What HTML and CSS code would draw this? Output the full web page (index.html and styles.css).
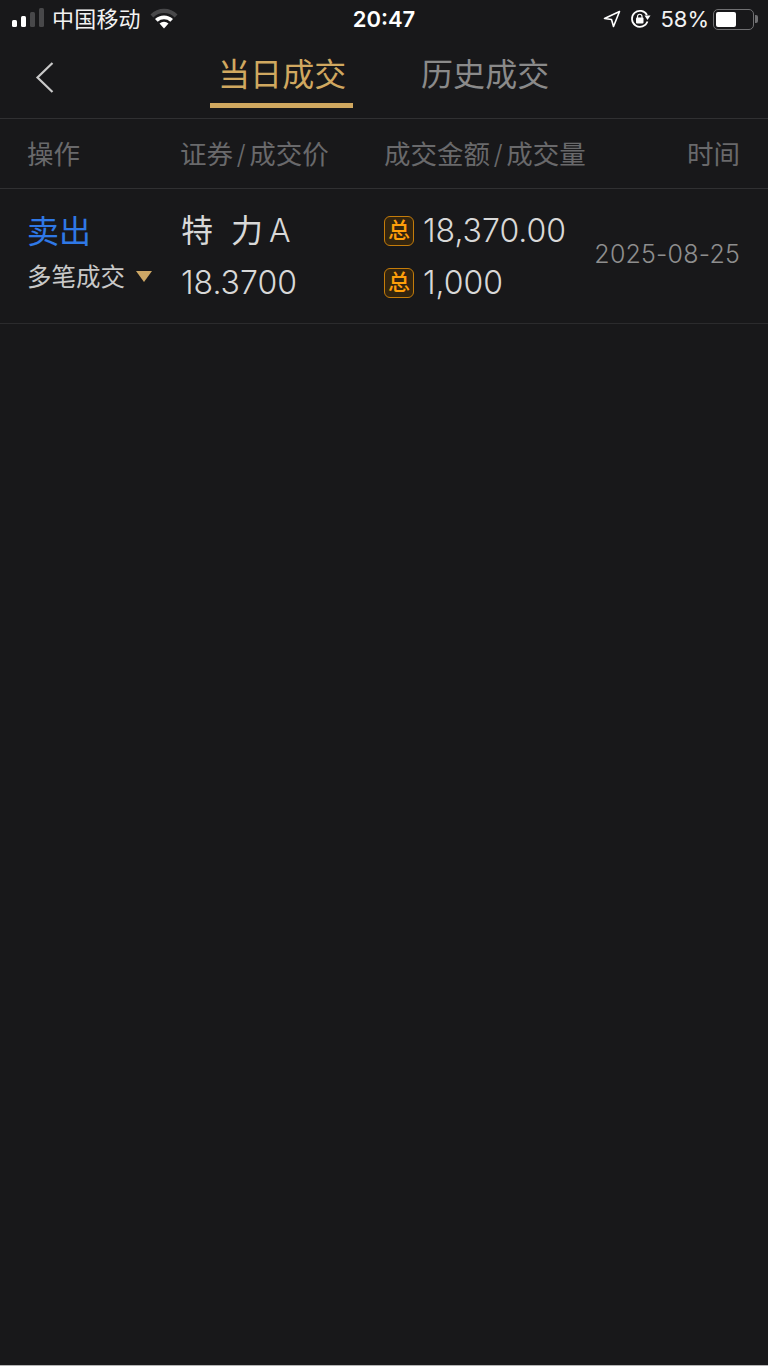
FILE: index.html
```html
<!DOCTYPE html>
<html lang="zh-CN">
<head>
<meta charset="utf-8">
<title>当日成交</title>
<link rel="stylesheet" href="styles.css">
</head>
<body>
<div class="page">
  <header class="status">
    <div class="status-left">
      <svg class="signal" width="32" height="22" viewBox="0 0 32 22"><rect x="0" y="12" width="5" height="7" rx="1.5" fill="#fff"/><rect x="9" y="8" width="5" height="11" rx="1.500" fill="#fff"/><rect x="18" y="4" width="5" height="15" rx="1.500" fill="#48484a"/><rect x="27" y="0" width="5" height="19" rx="1.500" fill="#48484a"/></svg>
      <span class="carrier">中国移动</span>
      <svg class="wifi" width="28" height="22" viewBox="0 0 28 22"><path d="M0.500 6.500A19 19 0 0 1 27.500 6.500L24.700 9.500A15 15 0 0 0 3.300 9.500Z" fill="#48484a"/><path d="M5 11A13 13 0 0 1 23 11L20.300 13.800A9.200 9.200 0 0 0 7.700 13.800Z" fill="#fff"/><path d="M9.500 15.500A7 7 0 0 1 18.500 15.500L14 20.500Z" fill="#fff"/></svg>
    </div>
    <div class="clock">20:47</div>
    <div class="status-right">
      <svg width="18" height="18" viewBox="0 0 18 18"><path d="M16.500 1.500L1.500 8.500L8.500 9.500L10.500 16.500Z" fill="none" stroke="#fff" stroke-width="1.600" stroke-linejoin="round"/></svg>
      <svg class="lock" width="21" height="20" viewBox="0 0 21 20"><path d="M17.500 12.500A8 8 0 1 1 17 6" fill="none" stroke="#fff" stroke-width="1.700"/><path d="M14.500 6.500L20.500 6.500L17.500 11Z" fill="#fff"/><rect x="6" y="8.500" width="7.500" height="6" rx="1" fill="#fff"/><path d="M7.500 9V7.500a2.200 2.200 0 0 1 4.500 0V9" fill="none" stroke="#fff" stroke-width="1.200"/></svg>
      <span class="percent">58%</span>
      <div class="battery"><div class="battery-body"><div class="battery-level"></div></div><div class="battery-tip"></div></div>
    </div>
  </header>

  <nav class="nav">
    <svg class="back" width="20" height="34" viewBox="0 0 20 34"><path d="M17.500 2L2.500 16.500L17.500 31" fill="none" stroke="#c9c9c9" stroke-width="2.200"/></svg>
    <div class="tab tab-active">当日成交</div>
    <div class="tab">历史成交</div>
  </nav>

  <div class="row-head">
    <div class="col-op">操作</div>
    <div class="col-sec">证券<i>/</i>成交价</div>
    <div class="col-amt">成交金额<i>/</i>成交量</div>
    <div class="col-time">时间</div>
  </div>

  <div class="row">
    <div class="col-op cell-op">
      <div class="sell">卖出</div>
      <div class="multi">多笔成交<span class="caret"></span></div>
    </div>
    <div class="col-sec values">
      <div class="value name">特<span class="name-gap">力</span><span class="name-a">A</span></div>
      <div class="value">18.3700</div>
    </div>
    <div class="col-amt values">
      <div class="value"><span class="badge">总</span>18,370.00</div>
      <div class="value"><span class="badge">总</span>1,000</div>
    </div>
    <div class="col-time date">2025-08-25</div>
  </div>
</div>
</body>
</html>
```

FILE: styles.css
```css
* { box-sizing: border-box; }
html, body { margin: 0; padding: 0; }
body {
  background: #18181a;
  font-family: "Inter", "Noto Sans CJK SC", sans-serif;
  color: #d8d8d8;
}
.page {
  height: 1366px;
  border-bottom: 1px solid #b5b5b5;
  overflow: hidden;
}
.status {
  height: 38px;
  display: grid;
  grid-template-columns: 1fr auto 1fr;
  align-items: center;
  padding: 0 10px 0 12px;
  color: #fff;
}
.status-left { display: flex; align-items: center; }
.signal { margin-right: 8px; }
.carrier { font-size: 22px; line-height: 30px; color: #f2f2f2; margin-right: 9px; letter-spacing: 0.200px; }
.clock { font-size: 22px; font-weight: 600; margin-left: -2px; }
.status-right { display: flex; align-items: center; justify-content: flex-end; }
.lock { margin-left: 9px; }
.percent { font-size: 22px; margin-left: 9px; margin-right: 4px; color: #f2f2f2; }
.battery { display: flex; align-items: center; }
.battery-body {
  width: 41px; height: 21px;
  border: 1.500px solid #707072;
  border-radius: 5px;
  padding: 2px;
}
.battery-level { width: 20px; height: 100%; background: #fff; border-radius: 2px; }
.battery-tip { width: 3px; height: 8px; background: #707072; border-radius: 0 2px 2px 0; margin-left: 1px; }

.nav {
  position: relative;
  height: 81px;
  border-bottom: 1px solid #303032;
  display: flex;
  padding-left: 210px;
  gap: 68px;
}
.back { position: absolute; left: 35px; top: 23px; }
.tab {
  font-size: 32px;
  line-height: 40px;
  padding: 17px 8px 0;
  width: 143px;
  height: 70px;
  white-space: nowrap;
  color: #8a8a8a;
  letter-spacing: 0.100px;
}
.tab + .tab { padding-left: 0; }
.tab-active {
  color: #d0a860;
  border-bottom: 5px solid #d0a860;
}

.row-head, .row {
  display: grid;
  grid-template-columns: 181px 203px 1fr auto;
  padding-right: 28px;
}
.row-head {
  height: 70px;
  align-items: center;
  border-bottom: 1px solid #303032;
  font-size: 26.500px;
  color: #69696b;
  padding-bottom: 3px;
}
.row-head i { font-style: normal; font-weight: 300; margin: 0 3.500px; }
.col-op { padding-left: 27px; }
.row-head .col-sec { margin-left: -1px; }
.row { height: 135px; border-bottom: 1px solid #2b2b2d; align-items: center; }
.cell-op { margin-bottom: 8px; }
.sell { font-size: 32px; line-height: 40px; color: #2f78e6; }
.multi { font-size: 24.500px; line-height: 32px; margin-top: 9px; color: #c8c8c8; display: flex; align-items: center; white-space: nowrap; }
.caret {
  width: 0; height: 0;
  border-left: 8px solid transparent;
  border-right: 8px solid transparent;
  border-top: 11px solid #cda765;
  margin-left: 11px;
}
.values { display: flex; flex-direction: column; gap: 12px; padding-top: 2px; }
.value { font-size: 32px; line-height: 40px; color: #d8d8d8; display: flex; align-items: center; white-space: nowrap; font-weight: 350; }
.name { font-weight: 400; }
.name-gap { margin-left: 18px; }
.name-a { margin-left: 6px; font-weight: 350; }
.badge {
  width: 30px; height: 30px;
  border: 1.500px solid #c47c0a;
  background: #33250f;
  border-radius: 6px;
  color: #ff9f0a;
  font-size: 22px;
  line-height: 26px;
  text-align: center;
  margin-right: 9px;
  font-weight: 500;
}
.date { font-size: 25px; color: #8e8e8e; font-weight: 350; white-space: nowrap; letter-spacing: 0.200px; margin-bottom: 5px; }
```
